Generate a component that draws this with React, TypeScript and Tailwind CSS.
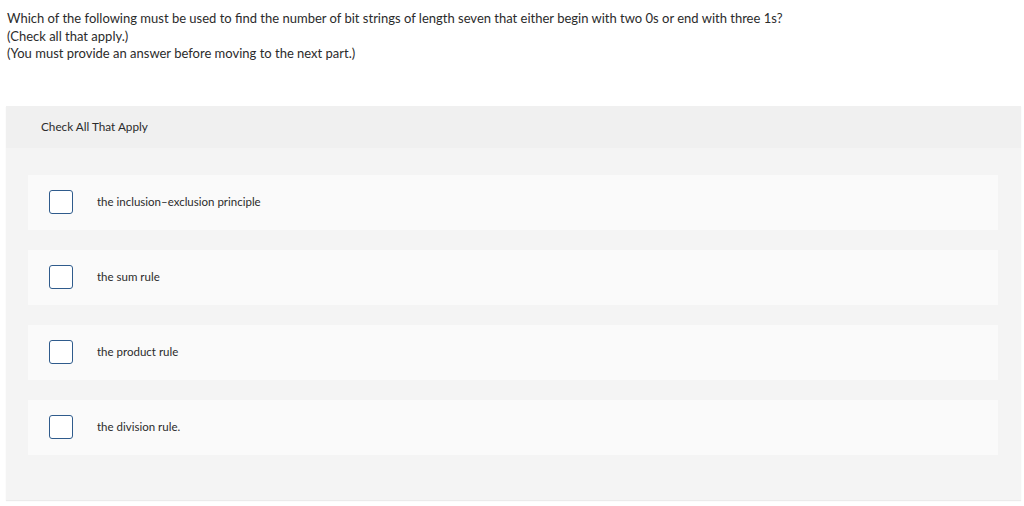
import React from 'react';

const options = [
  'the inclusion–exclusion principle',
  'the sum rule',
  'the product rule',
  'the division rule.',
];

export default function App() {
  return (
    <div className="min-h-screen bg-white text-[#2b2b2b]" style={{ fontFamily: 'Lato, "Open Sans", sans-serif' }}>
      <div className="px-[7px] pt-[10px] text-[13px] leading-[17.5px]">
        <p>Which of the following must be used to find the number of bit strings of length seven that either begin with two 0s or end with three 1s?</p>
        <p>(Check all that apply.)</p>
        <p>(You must provide an answer before moving to the next part.)</p>
      </div>

      <div className="ml-[6px] mr-[3px] mt-[43px] bg-[#f4f4f4] shadow-[0_1px_1px_rgba(0,0,0,0.08)]">
        <div className="flex h-[42px] items-center bg-[#f0f0f0] pl-[35px] text-[11.75px]">
          Check All That Apply
        </div>
        <div className="flex flex-col gap-[20px] pb-[45px] pl-[22px] pr-[23px] pt-[27px]">
          {options.map((o) => (
            <label key={o} className="flex h-[55px] items-center bg-[#fafafa] pl-[21px] text-[11.5px]">
              <span className="h-[24px] w-[24px] rounded-[3px] border border-[#2f5b8c] bg-white" />
              <span className="ml-[24px]">{o}</span>
            </label>
          ))}
        </div>
      </div>
    </div>
  );
}
